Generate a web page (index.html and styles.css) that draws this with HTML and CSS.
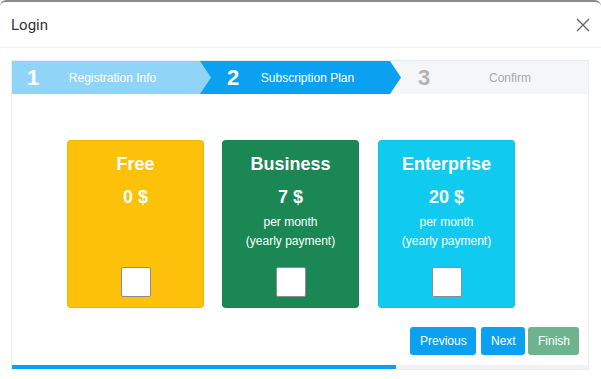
FILE: index.html
```html
<!DOCTYPE html>
<html lang="en">
<head>
  <meta charset="UTF-8">
  <title>Login</title>
  <link rel="stylesheet" href="styles.css">
</head>
<body>

  <div class="modal">
    <div class="modal-header">
      <span class="modal-title">Login</span>
      <svg class="close" width="14" height="14" viewBox="0 0 14 14">
        <path d="M1 1 L13 13 M13 1 L1 13" stroke="#666" stroke-width="1.4" fill="none"/>
      </svg>
    </div>

    <div class="wizard">
      <div class="steps">
        <div class="step done"><span class="num">1</span><span class="label">Registration Info</span></div>
        <div class="step active"><span class="num">2</span><span class="label">Subscription Plan</span></div>
        <div class="step todo"><span class="num">3</span><span class="label">Confirm</span></div>
      </div>

      <div class="plans">
        <div class="plan free">
          <div class="plan-name">Free</div>
          <div class="plan-price">0 $</div>
          <div class="check"></div>
        </div>
        <div class="plan business">
          <div class="plan-name">Business</div>
          <div class="plan-price">7 $</div>
          <div class="plan-note">per month<br>(yearly payment)</div>
          <div class="check"></div>
        </div>
        <div class="plan enterprise">
          <div class="plan-name">Enterprise</div>
          <div class="plan-price">20 $</div>
          <div class="plan-note">per month<br>(yearly payment)</div>
          <div class="check"></div>
        </div>
      </div>

      <div class="actions">
        <button class="btn prev">Previous</button>
        <button class="btn next">Next</button>
        <button class="btn finish">Finish</button>
      </div>

      <div class="progress"><div class="progress-bar" style="width: 66.7%"></div></div>
    </div>
  </div>

</body>
</html>
```

FILE: styles.css
```css
body {
  margin: 0;
  font-family: 'Liberation Sans', Arial, sans-serif;
  background: white;
  overflow: hidden;
}

.modal {
  border-top: 2px solid #8c8c8c;
  border-radius: 6px 6px 0 0;
  height: 377px;
}

.modal-header {
  height: 45px;
  display: flex;
  align-items: center;
  justify-content: space-between;
  padding: 0 11px;
  border-bottom: 1px solid #eef0f2;
}

.modal-title {
  font-family: Roboto, sans-serif;
  font-size: 15px;
  color: #333;
}

.wizard {
  margin: 12px 12px 0 11px;
  border: 1px solid #eceef1;
}

.steps {
  display: flex;
  height: 33px;
  background: #f5f6f8;
}

.step {
  position: relative;
  display: flex;
  align-items: center;
  box-sizing: border-box;
}

.step::after {
  content: "";
  position: absolute;
  right: -11px;
  top: 0;
  width: 11px;
  height: 33px;
  clip-path: polygon(0 0, 100% 50%, 0 100%);
  z-index: 1;
}

.step.done { width: 188px; padding-left: 15px; background: #90d4f8; }
.step.done::after { background: #90d4f8; }
.step.active { width: 190px; padding-left: 27px; background: #0ca1f0; }
.step.active::after { background: #0ca1f0; }
.step.todo { flex: 1; padding-left: 28px; }
.step.todo::after { display: none; }

.num {
  font-size: 22px;
  font-weight: bold;
  color: white;
  width: 14px;
}

.label {
  flex: 1;
  text-align: center;
  font-size: 12px;
  color: white;
  padding-right: 16px;
}

.step.todo .num { color: #b3b3b3; }
.step.todo .label { color: #a9a9a9; padding-right: 0; }

.plans {
  display: flex;
  gap: 18px;
  padding: 46px 0 0 55px;
}

.plan {
  width: 137px;
  height: 168px;
  box-sizing: border-box;
  border-radius: 4px;
  border: 1px solid rgba(0, 0, 0, 0.06);
  color: white;
  text-align: center;
  display: flex;
  flex-direction: column;
  align-items: center;
  padding: 11px 0 10px;
}

.plan.free { background: #fec109; }
.plan.business { background: #1b8754; }
.plan.enterprise { background: #10caf0; margin-left: 1px; }

.plan-name {
  font-size: 18px;
  font-weight: bold;
  line-height: 24px;
}

.plan-price {
  margin-top: 9px;
  font-size: 18px;
  font-weight: bold;
  line-height: 24px;
}

.plan-note {
  margin-top: 4px;
  font-size: 12px;
  line-height: 19px;
}

.check {
  margin-top: auto;
  width: 28px;
  height: 28px;
  background: white;
  border: 1px solid #8d8d8d;
  border-radius: 2px;
}

.actions {
  display: flex;
  justify-content: flex-end;
  padding: 19px 9px 0 0;
}

.btn {
  height: 28px;
  padding: 0 10px;
  border: none;
  border-radius: 3px;
  background: #0ca1f0;
  color: white;
  font-family: 'Liberation Sans', Arial, sans-serif;
  font-size: 12px;
}

.btn.prev { width: 66px; }
.btn.next { width: 44px; margin-left: 5px; }
.btn.finish { width: 51px; margin-left: 3px; background: #6db48e; }

.progress {
  margin-top: 10px;
  height: 4px;
  background: #f0f2f5;
}

.progress-bar {
  height: 100%;
  background: #0ca1f0;
}
```
